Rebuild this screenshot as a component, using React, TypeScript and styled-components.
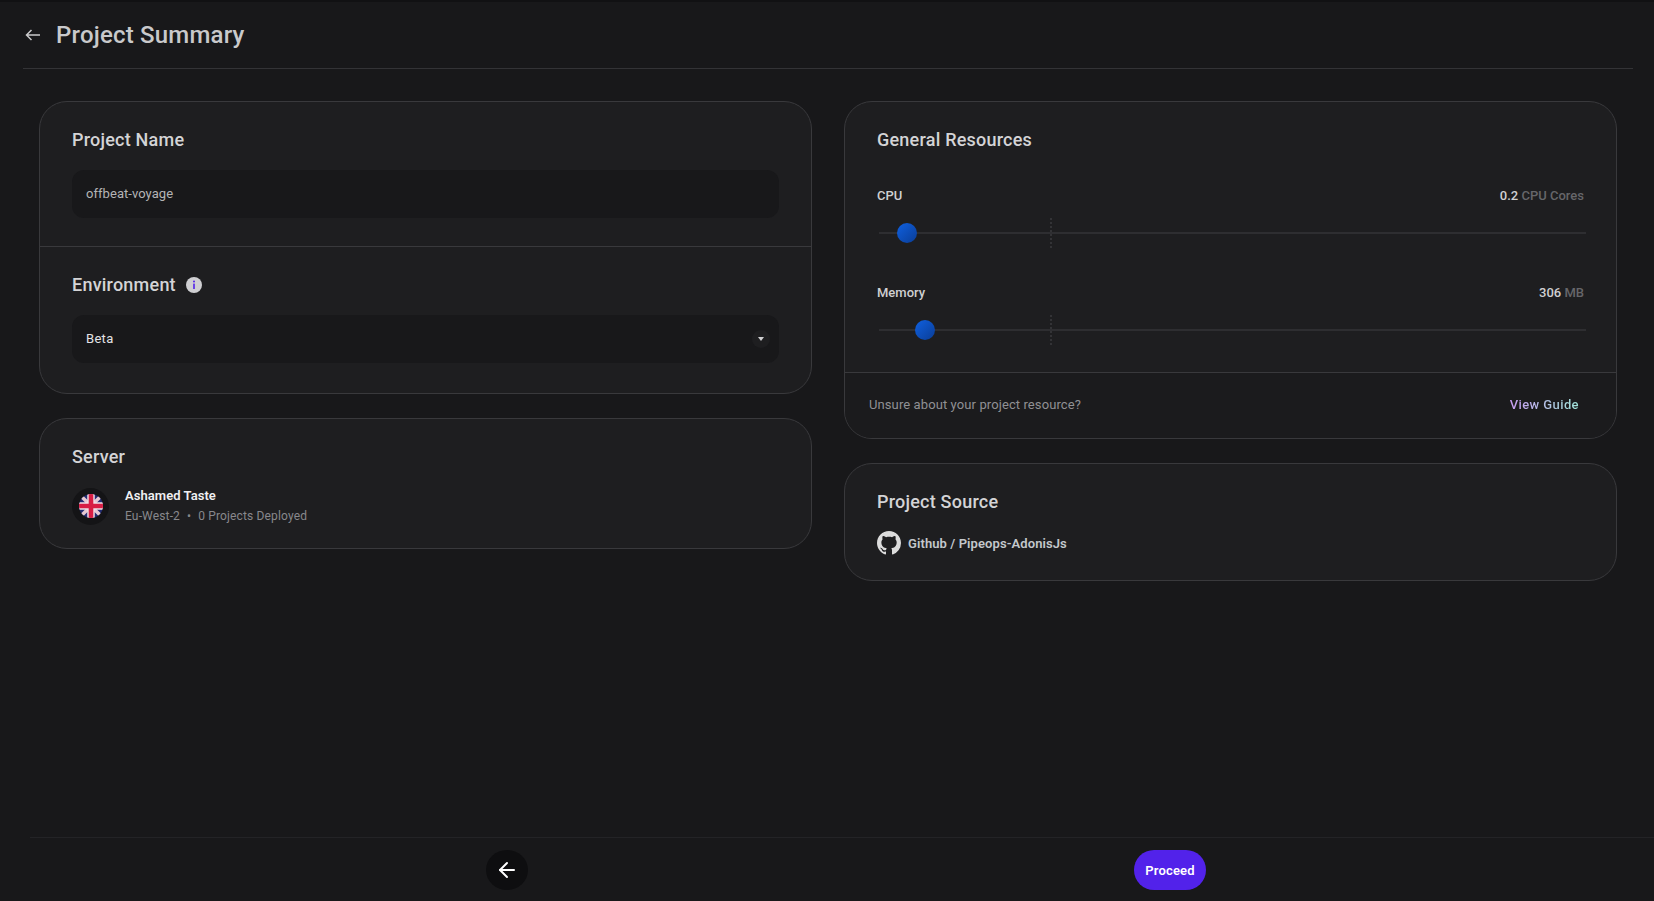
import React from "react";
import styled, { createGlobalStyle } from "styled-components";
import { ArrowLeft } from "lucide-react";
import { BsGithub } from "react-icons/bs";

const GlobalStyle = createGlobalStyle`
    * {
        box-sizing: border-box;
    }

    html, body {
        margin: 0;
        background-color: #18181a;
        font-family: "Roboto", "Liberation Sans", sans-serif;
    }
`

const Page = styled.div`
    display: flex;
    flex-direction: column;
    height: 100vh;
    overflow: hidden;
    border-top: 2px solid #111113;
`

const Header = styled.header`
    display: flex;
    align-items: center;
    gap: 15px;
    height: 67px;
    margin: 0 21px 0 23px;
    padding: 0 0 1px 2px;
    border-bottom: 1px solid #333336;
`

const Title = styled.h1`
    margin: 0;
    font-size: 24px;
    font-weight: 500;
    line-height: 32px;
    letter-spacing: 0.2px;
    color: #c9c9cb;
`

const Main = styled.main`
    flex: 1;
    display: grid;
    grid-template-columns: 773px 773px;
    gap: 32px;
    align-items: start;
    padding: 32px 0 0 39px;
`

const Column = styled.div`
    display: flex;
    flex-direction: column;
    gap: 24px;
`

const Card = styled.section`
    background-color: #1e1e20;
    border: 1px solid #39393c;
    border-radius: 28px;
    overflow: hidden;
`

const Section = styled.div<{ $top: number; $bottom: number; $divided?: boolean }>`
    padding: ${(p) => p.$top}px 32px ${(p) => p.$bottom}px 32px;
    border-bottom: ${(p) => (p.$divided ? "1px solid #39393c" : "none")};
`

const CardTitle = styled.h2`
    display: flex;
    align-items: center;
    gap: 10px;
    margin: 0;
    font-size: 18px;
    font-weight: 500;
    line-height: 24px;
    letter-spacing: 0.22px;
    color: #d4d4d6;
`

const Field = styled.div<{ $light?: boolean }>`
    display: flex;
    align-items: center;
    justify-content: space-between;
    height: 48px;
    margin-top: 18px;
    padding: 0 9px 2px 14px;
    border-radius: 12px;
    background-color: #18181a;
    font-size: 13px;
    letter-spacing: ${(p) => (p.$light ? "0.3px" : "0.05px")};
    color: ${(p) => (p.$light ? "#e4e4e6" : "#b4b4b6")};
`

const Caret = styled.span`
    display: flex;
    align-items: center;
    justify-content: center;
    width: 18px;
    height: 18px;
    margin-bottom: -2px;
    border-radius: 50%;
    background-color: #1e1e20;

    &::after {
        content: "";
        border-left: 3px solid transparent;
        border-right: 3px solid transparent;
        border-top: 4px solid #d0d0d2;
    }
`

const ServerRow = styled.div`
    display: flex;
    align-items: center;
    gap: 16px;
    margin-top: 17px;
`

const FlagWrap = styled.span`
    display: flex;
    align-items: center;
    justify-content: center;
    width: 37px;
    height: 37px;
    border-radius: 50%;
    background-color: #141416;
`

const Flag = styled.svg`
    width: 24px;
    height: 24px;
    border-radius: 50%;
    filter: blur(0.6px);
`

const ServerName = styled.div`
    font-size: 13px;
    font-weight: 600;
    line-height: 20px;
    letter-spacing: 0.05px;
    color: #f0f0f2;
`

const ServerMeta = styled.div`
    display: flex;
    gap: 7px;
    font-size: 12px;
    line-height: 20px;
    letter-spacing: 0.15px;
    color: #88888c;
`

const SliderBlock = styled.div`
    margin-top: 31px;

    &:first-of-type {
        margin-top: 35px;
    }
`

const SliderHead = styled.div`
    display: flex;
    justify-content: space-between;
    font-size: 13px;
    font-weight: 500;
    line-height: 18px;
    color: #d0d0d2;
`

const Unit = styled.span`
    color: #66666a;
`

const Track = styled.div`
    position: relative;
    height: 40px;
    margin: 8px -2px 0 2px;

    &::before {
        content: "";
        position: absolute;
        left: 0;
        right: 0;
        top: 19px;
        height: 2px;
        background-color: #2e2e31;
    }
`

const Tick = styled.span<{ $left: number }>`
    position: absolute;
    left: ${(p) => p.$left}%;
    top: 5px;
    width: 2px;
    height: 30px;
    margin-left: -1px;
    background: repeating-linear-gradient(180deg, #333336 0 2px, transparent 2px 4px);
`

const Thumb = styled.span<{ $left: number }>`
    position: absolute;
    left: ${(p) => p.$left}%;
    top: 10px;
    width: 20px;
    height: 20px;
    margin-left: -10px;
    border-radius: 50%;
    background: linear-gradient(135deg, #0f60e0, #0a3d96);
`

const Advice = styled.div`
    display: flex;
    align-items: center;
    justify-content: space-between;
    height: 65px;
    padding: 0 37px 3px 24px;
    background-color: #1b1b1d;
    font-size: 13px;
    letter-spacing: 0.1px;
    color: #909094;
`

const GuideLink = styled.a`
    font-weight: 500;
    letter-spacing: 0.4px;
    background: linear-gradient(90deg, #c79bf0, #9fe3d8);
    -webkit-background-clip: text;
    background-clip: text;
    color: transparent;
`

const SourceRow = styled.div`
    display: flex;
    align-items: center;
    gap: 7px;
    margin-top: 17px;
    font-size: 13px;
    font-weight: 600;
    letter-spacing: 0.09px;
    color: #c4c8cc;

    svg {
        color: #dcdcdc;
    }
`

const Footer = styled.footer`
    display: flex;
    justify-content: space-between;
    height: 64px;
    margin-left: 30px;
    padding: 12px 448px 0 456px;
    border-top: 1px solid #232326;
`

const BackButton = styled.button`
    display: flex;
    align-items: center;
    justify-content: center;
    width: 42px;
    height: 40px;
    padding: 0;
    border: none;
    border-radius: 50%;
    background-color: #0e0e10;
    color: #fff;
`

const ProceedButton = styled.button`
    width: 72px;
    height: 40px;
    padding: 0;
    border: none;
    border-radius: 20px;
    background-color: #5222ea;
    font-family: inherit;
    font-size: 13px;
    font-weight: 600;
    letter-spacing: 0.15px;
    color: #fff;
`

const resources = [
    { name: 'CPU', value: '0.2', unit: 'CPU Cores', thumb: 3.9 },
    { name: 'Memory', value: '306', unit: 'MB', thumb: 6.5 },
]

const SmallArrow = () => (
    <svg width="16" height="12" viewBox="0 0 16 12" fill="none" stroke="#c9c9cb" strokeWidth="1.5">
        <path d="M15 6H1.5M6.5 1L1.5 6l5 5" />
    </svg>
)

const InfoIcon = () => (
    <svg width="16" height="16" viewBox="0 0 16 16">
        <circle cx="8" cy="8" r="8" fill="#cfcfd2" />
        <circle cx="8" cy="4.6" r="1" fill="#5222ea" />
        <rect x="7.2" y="6.6" width="1.6" height="5.4" fill="#5222ea" />
    </svg>
)

const UkFlag = () => (
    <Flag viewBox="0 0 24 24">
        <rect width="24" height="24" fill="#222c72" />
        <path d="M0 0L24 24M24 0L0 24" stroke="#e6c8d2" strokeWidth="3.5" />
        <path d="M12 0V24M0 12H24" stroke="#f0e0e6" strokeWidth="7.5" />
        <path d="M12 0V24M0 12H24" stroke="#d81e44" strokeWidth="4.6" />
    </Flag>
)

const App = () => {
    return (
        <Page>
            <GlobalStyle />
            <Header>
                <SmallArrow />
                <Title>Project Summary</Title>
            </Header>
            <Main>
                <Column>
                    <Card>
                        <Section $top={26} $bottom={28} $divided>
                            <CardTitle>Project Name</CardTitle>
                            <Field>offbeat-voyage</Field>
                        </Section>
                        <Section $top={26} $bottom={30}>
                            <CardTitle>Environment <InfoIcon /></CardTitle>
                            <Field $light>Beta <Caret /></Field>
                        </Section>
                    </Card>
                    <Card>
                        <Section $top={26} $bottom={22}>
                            <CardTitle>Server</CardTitle>
                            <ServerRow>
                                <FlagWrap><UkFlag /></FlagWrap>
                                <div>
                                    <ServerName>Ashamed Taste</ServerName>
                                    <ServerMeta>
                                        <span>Eu-West-2</span>
                                        <span>•</span>
                                        <span>0 Projects Deployed</span>
                                    </ServerMeta>
                                </div>
                            </ServerRow>
                        </Section>
                    </Card>
                </Column>
                <Column>
                    <Card>
                        <Section $top={26} $bottom={22} $divided>
                            <CardTitle>General Resources</CardTitle>
                            {resources.map((r) => (
                                <SliderBlock key={r.name}>
                                    <SliderHead>
                                        <span>{r.name}</span>
                                        <span>{r.value} <Unit>{r.unit}</Unit></span>
                                    </SliderHead>
                                    <Track>
                                        <Tick $left={24.3} />
                                        <Thumb $left={r.thumb} />
                                    </Track>
                                </SliderBlock>
                            ))}
                        </Section>
                        <Advice>
                            <span>Unsure about your project resource?</span>
                            <GuideLink>View Guide</GuideLink>
                        </Advice>
                    </Card>
                    <Card>
                        <Section $top={26} $bottom={25}>
                            <CardTitle>Project Source</CardTitle>
                            <SourceRow>
                                <BsGithub size={24} />
                                <span>Github / Pipeops-AdonisJs</span>
                            </SourceRow>
                        </Section>
                    </Card>
                </Column>
            </Main>
            <Footer>
                <BackButton><ArrowLeft size={24} /></BackButton>
                <ProceedButton>Proceed</ProceedButton>
            </Footer>
        </Page>
    )
}

export default App;
